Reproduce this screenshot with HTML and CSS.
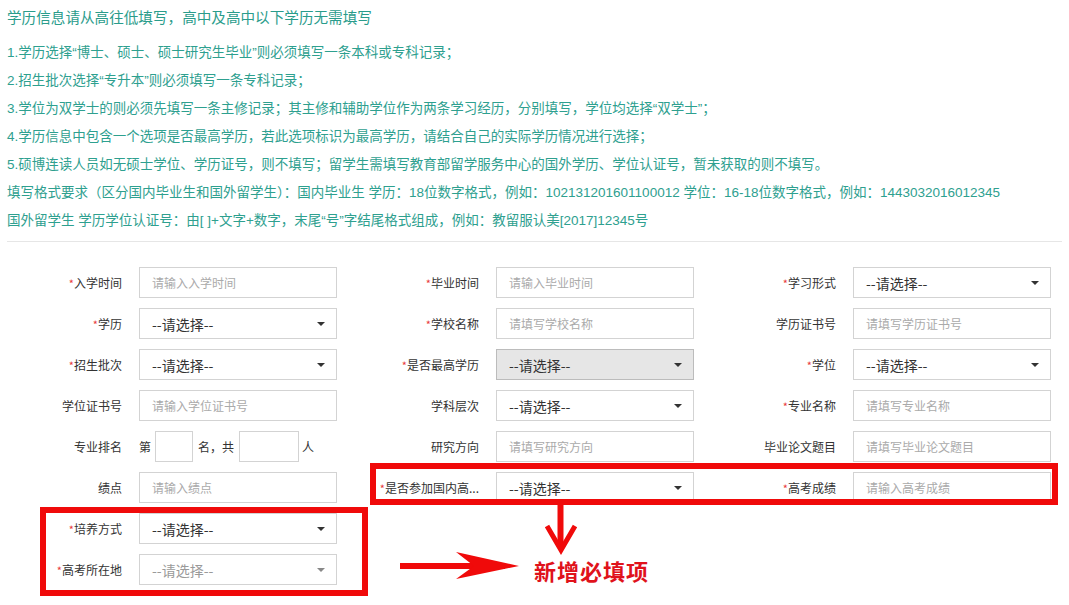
FILE: index.html
```html
<!DOCTYPE html>
<html lang="zh-CN">
<head>
<meta charset="utf-8">
<title>学历信息</title>
<link rel="stylesheet" href="styles.css">
</head>
<body>
<div class="page">
  <div class="notice">
    <h2 class="notice-title">学历信息请从高往低填写，高中及高中以下学历无需填写</h2>
    <p>1.学历选择“博士、硕士、硕士研究生毕业”则必须填写一条本科或专科记录；</p>
    <p>2.招生批次选择“专升本”则必须填写一条专科记录；</p>
    <p>3.学位为双学士的则必须先填写一条主修记录；其主修和辅助学位作为两条学习经历，分别填写，学位均选择“双学士”；</p>
    <p>4.学历信息中包含一个选项是否最高学历，若此选项标识为最高学历，请结合自己的实际学历情况进行选择；</p>
    <p>5.硕博连读人员如无硕士学位、学历证号，则不填写；留学生需填写教育部留学服务中心的国外学历、学位认证号，暂未获取的则不填写。</p>
    <p>填写格式要求（区分国内毕业生和国外留学生）：国内毕业生 学历：18位数字格式，例如：102131201601100012 学位：16-18位数字格式，例如：1443032016012345</p>
    <p>国外留学生 学历学位认证号：由[ ]+文字+数字，末尾“号”字结尾格式组成，例如：教留服认美[2017]12345号</p>
  </div>
  <div class="sep"></div>
  <div class="form-grid">
    <div class="field"><span class="lbl"><i>*</i>入学时间</span><div class="box">请输入入学时间</div></div>
    <div class="field"><span class="lbl"><i>*</i>毕业时间</span><div class="box">请输入毕业时间</div></div>
    <div class="field"><span class="lbl"><i>*</i>学习形式</span><div class="box sel"><span>--请选择--</span><span class="caret"></span></div></div>

    <div class="field"><span class="lbl"><i>*</i>学历</span><div class="box sel"><span>--请选择--</span><span class="caret"></span></div></div>
    <div class="field"><span class="lbl"><i>*</i>学校名称</span><div class="box">请填写学校名称</div></div>
    <div class="field"><span class="lbl">学历证书号</span><div class="box">请填写学历证书号</div></div>

    <div class="field"><span class="lbl"><i>*</i>招生批次</span><div class="box sel"><span>--请选择--</span><span class="caret"></span></div></div>
    <div class="field"><span class="lbl"><i>*</i>是否最高学历</span><div class="box sel disabled"><span>--请选择--</span><span class="caret"></span></div></div>
    <div class="field"><span class="lbl"><i>*</i>学位</span><div class="box sel"><span>--请选择--</span><span class="caret"></span></div></div>

    <div class="field"><span class="lbl">学位证书号</span><div class="box">请输入学位证书号</div></div>
    <div class="field"><span class="lbl">学科层次</span><div class="box sel"><span>--请选择--</span><span class="caret"></span></div></div>
    <div class="field"><span class="lbl"><i>*</i>专业名称</span><div class="box">请填写专业名称</div></div>

    <div class="field"><span class="lbl">专业排名</span>
      <div class="rank"><span>第</span><div class="mini mini-a"></div><span>名，共</span><div class="mini mini-b"></div><span>人</span></div>
    </div>
    <div class="field"><span class="lbl">研究方向</span><div class="box">请填写研究方向</div></div>
    <div class="field"><span class="lbl">毕业论文题目</span><div class="box">请填写毕业论文题目</div></div>

    <div class="field"><span class="lbl">绩点</span><div class="box">请输入绩点</div></div>
    <div class="field"><span class="lbl"><i>*</i>是否参加国内高...</span><div class="box sel"><span>--请选择--</span><span class="caret"></span></div></div>
    <div class="field"><span class="lbl"><i>*</i>高考成绩</span><div class="box">请输入高考成绩</div></div>

    <div class="field"><span class="lbl"><i>*</i>培养方式</span><div class="box sel"><span>--请选择--</span><span class="caret"></span></div></div>
    <div class="field empty"></div>
    <div class="field empty"></div>

    <div class="field"><span class="lbl"><i>*</i>高考所在地</span><div class="box sel muted"><span>--请选择--</span><span class="caret caret-muted"></span></div></div>
    <div class="field empty"></div>
    <div class="field empty"></div>
  </div>

  <div class="annot">
    <svg class="annot-svg" width="1069" height="605" viewBox="0 0 1069 605">
      <rect x="373" y="466" width="682" height="36" fill="none" stroke="#f00a0a" stroke-width="6"/>
      <rect x="43" y="510" width="322" height="83" fill="none" stroke="#f00a0a" stroke-width="6"/>
      <line x1="560.5" y1="505" x2="560.5" y2="547" stroke="#f00a0a" stroke-width="6"/>
      <polyline points="547,526 561,550 575,526" fill="none" stroke="#f00a0a" stroke-width="5"/>
      <line x1="400" y1="566" x2="505" y2="566" stroke="#f00a0a" stroke-width="6"/>
      <polygon points="456,552 519,566 456,579 474,566" fill="#f00a0a"/>
    </svg>
    <div class="annot-text">新增必填项</div>
  </div>
</div>
</body>
</html>
```
FILE: styles.css
```css
body {
  margin: 0;
  background: #ffffff;
  font-family: "Noto Sans CJK SC", "Noto Sans", sans-serif;
}

.page {
  position: relative;
  width: 1069px;
  height: 605px;
  overflow: hidden;
}

.notice {
  padding: 8px 0 0 7px;
  color: #2ea08f;
  font-family: "Liberation Sans", "Noto Sans CJK SC", sans-serif;
}

.notice-title {
  margin: 0 0 11px;
  font-size: 14.6px;
  font-weight: normal;
  line-height: 20px;
  color: #2a9c8b;
}

.notice p {
  margin: 0;
  font-size: 13.5px;
  line-height: 28px;
  white-space: nowrap;
}

.sep {
  margin: 6px 7px 0;
  border-top: 1px solid #e6e6e6;
}

.form-grid {
  display: grid;
  grid-template-columns: repeat(3, 357px);
  row-gap: 10px;
  padding-top: 25px;
}

.field {
  display: flex;
  align-items: center;
  height: 31px;
}

.lbl {
  width: 122px;
  margin-right: 17px;
  text-align: right;
  font-size: 12px;
  color: #333333;
  white-space: nowrap;
  flex: none;
}

.lbl i {
  font-style: normal;
  color: #e8383d;
  font-size: 11px;
}

.box {
  box-sizing: border-box;
  width: 198px;
  height: 31px;
  border: 1px solid #d3d3d3;
  padding: 0 12px;
  display: flex;
  align-items: center;
  font-size: 12px;
  color: #aaaaaa;
  background: #ffffff;
  white-space: nowrap;
}

.box.sel {
  font-size: 14px;
  color: #333333;
  justify-content: space-between;
  padding-right: 11px;
}

.box.disabled {
  background: #e6e6e6;
  border-color: #bcbcbc;
}

.box.muted {
  color: #9a9a9a;
}

.caret {
  width: 0;
  height: 0;
  border-left: 4px solid transparent;
  border-right: 4px solid transparent;
  border-top: 4px solid #333333;
}

.caret-muted {
  border-top-color: #888888;
}

.rank {
  display: flex;
  align-items: center;
  font-size: 12px;
  color: #333333;
}

.mini {
  box-sizing: border-box;
  height: 31px;
  border: 1px solid #d3d3d3;
}

.mini-a {
  width: 38px;
  margin: 0 5px 0 4px;
}

.mini-b {
  width: 60px;
  margin: 0 3px 0 5px;
}

.annot {
  position: absolute;
  left: 0;
  top: 0;
  width: 1069px;
  height: 605px;
  pointer-events: none;
}

.annot-svg {
  display: block;
}

.annot-text {
  position: absolute;
  left: 534px;
  top: 557px;
  font-size: 22px;
  line-height: 26px;
  font-weight: bold;
  letter-spacing: 1px;
  color: #e0121b;
  white-space: nowrap;
}
```
